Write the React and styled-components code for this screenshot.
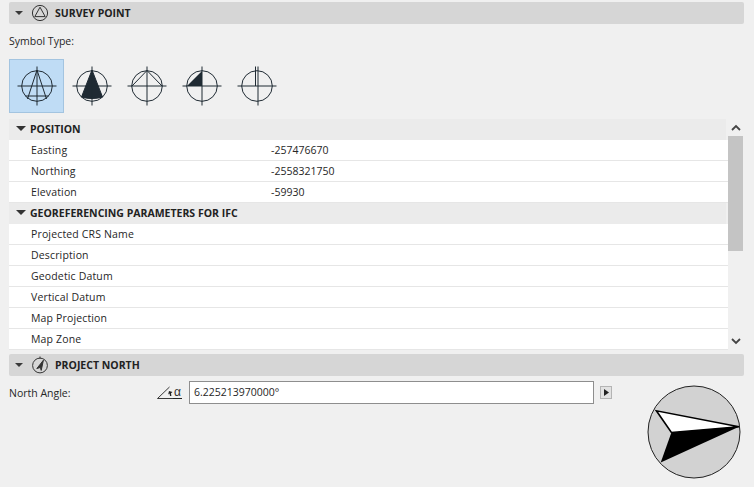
import React from "react";
import styled, { createGlobalStyle } from "styled-components";

const positionRows = [
  { label: "Easting", value: "-257476670" },
  { label: "Northing", value: "-2558321750" },
  { label: "Elevation", value: "-59930" },
];

const georefRows = [
  "Projected CRS Name",
  "Description",
  "Geodetic Datum",
  "Vertical Datum",
  "Map Projection",
  "Map Zone",
];

const ink = "#1f2a33";

function Crossed({ children }) {
  return (
    <svg width="44" height="44" viewBox="-22 -22 44 44" fill="none" stroke={ink} strokeWidth="1">
      <circle r="15.3" />
      {children}
    </svg>
  );
}

const FullCross = () => <path d="M-19.5 0H19.5M0 -19.5V19.5" />;

const symbols = [
  <Crossed key="a">
    <FullCross />
    <path d="M-9.5 13L0 -16L9.5 13M-11.5 10H11.5" />
  </Crossed>,
  <Crossed key="b">
    <path d="M-10.5 11L0 -16L10.5 11C4 13 -4 13 -10.5 11Z" fill={ink} />
    <FullCross />
  </Crossed>,
  <Crossed key="c">
    <FullCross />
    <path d="M-15 0L0 -15.5L15 0" />
  </Crossed>,
  <Crossed key="d">
    <path d="M-15 0L0 -15V0Z" fill={ink} stroke="none" />
    <FullCross />
  </Crossed>,
  <Crossed key="e">
    <path d="M-19.5 0H19.5M1 0V19.5M-1.5 -19.5V0M1 -19.5V0" />
  </Crossed>,
];

function App() {
  return (
    <Page>
      <GlobalStyle />
      <SectionBar>
        <Caret />
        <svg width="18" height="18" viewBox="0 0 18 18" fill="none" stroke="#333" strokeWidth="1">
          <circle cx="9" cy="9" r="7.6" />
          <path d="M9 3.2L14.2 12.6H3.8Z" />
        </svg>
        <BarTitle>SURVEY POINT</BarTitle>
      </SectionBar>

      <FieldLabel>Symbol Type:</FieldLabel>
      <SymbolRow>
        {symbols.map((symbol, i) => (
          <SymbolTile key={i} $selected={i === 0}>
            {symbol}
          </SymbolTile>
        ))}
      </SymbolRow>

      <TableWrap>
        <Table>
          <GroupRow>
            <GroupCaret />
            POSITION
          </GroupRow>
          {positionRows.map((row) => (
            <Row key={row.label}>
              <RowLabel>{row.label}</RowLabel>
              <span>{row.value}</span>
            </Row>
          ))}
          <GroupRow>
            <GroupCaret />
            GEOREFERENCING PARAMETERS FOR IFC
          </GroupRow>
          {georefRows.map((label) => (
            <Row key={label}>
              <RowLabel>{label}</RowLabel>
            </Row>
          ))}
        </Table>
        <Scrollbar>
          <ScrollArrow>
            <svg width="10" height="7" viewBox="0 0 10 7" fill="none" stroke="#444" strokeWidth="1.8">
              <path d="M1 6L5 2L9 6" />
            </svg>
          </ScrollArrow>
          <ScrollThumb />
          <ScrollArrow>
            <svg width="10" height="7" viewBox="0 0 10 7" fill="none" stroke="#444" strokeWidth="1.8">
              <path d="M1 1L5 5L9 1" />
            </svg>
          </ScrollArrow>
        </Scrollbar>
      </TableWrap>

      <SectionBar>
        <Caret />
        <svg width="18" height="18" viewBox="0 0 18 18" fill="none" stroke="#333" strokeWidth="1">
          <circle cx="9" cy="9.5" r="7.4" />
          <path d="M9 0.5V2.5" />
          <path d="M12.4 4.2L5.8 12.6L9.4 11.4L10.2 14.4Z" fill="#333" />
        </svg>
        <BarTitle>PROJECT NORTH</BarTitle>
      </SectionBar>

      <NorthBody>
        <NorthLabel>North Angle:</NorthLabel>
        <AngleGlyph>
          <svg width="16" height="13" viewBox="0 0 16 13" fill="none" stroke="#222" strokeWidth="0.9">
            <path d="M16 12.5H0.5L12.5 1" />
            <path d="M12 5L15.5 6L14 7.2L14.4 10H13L12.6 7.6L11.2 8.6Z" fill="#222" stroke="none" />
          </svg>
          <AlphaMark>α</AlphaMark>
        </AngleGlyph>
        <AngleInput>6.225213970000°</AngleInput>
        <StepButton>
          <svg width="5" height="7" viewBox="0 0 5 7">
            <path d="M0 0L5 3.5L0 7Z" fill="#222" />
          </svg>
        </StepButton>
        <Compass>
          <svg width="94" height="94" viewBox="0 0 94 94">
            <circle cx="47" cy="47" r="46" fill="#d2d2d2" stroke="#222" strokeWidth="1" />
            <path d="M92 41.8L9.4 25.8L24.4 47.5Z" fill="#fff" stroke="#000" strokeWidth="1.6" />
            <path d="M92 41.8L24.4 47.5L13.7 77.5Z" fill="#000" />
          </svg>
        </Compass>
      </NorthBody>
    </Page>
  );
}

const GlobalStyle = createGlobalStyle`
  html, body {
    margin: 0;
    padding: 0;
    background: #f0f0f0;
  }
  body {
    font-family: "Open Sans", "Noto Sans", sans-serif;
    font-size: 10.5px;
    color: #262626;
  }
`;

const Page = styled.div`
  width: 754px;
  height: 487px;
  padding: 2px 10px 0 9px;
  box-sizing: border-box;
  overflow: hidden;
`;

const SectionBar = styled.div`
  height: 22px;
  display: flex;
  align-items: center;
  gap: 6px;
  padding-left: 6px;
  background: #d6d6d6;
  border-radius: 2px;
`;

const Caret = styled.span`
  width: 0;
  height: 0;
  margin-right: 2px;
  border-left: 4px solid transparent;
  border-right: 4px solid transparent;
  border-top: 4px solid #3a3a3a;
`;

const BarTitle = styled.span`
  font-weight: 700;
  font-size: 10.5px;
  color: #222;
`;

const FieldLabel = styled.div`
  height: 14px;
  line-height: 14px;
  margin-top: 10px;
`;

const SymbolRow = styled.div`
  display: flex;
  margin-top: 11px;
`;

const SymbolTile = styled.div`
  width: 55px;
  height: 54px;
  box-sizing: border-box;
  display: flex;
  align-items: center;
  justify-content: center;
  background: ${({ $selected }) => ($selected ? "#bfdcf5" : "transparent")};
  border: 1px solid ${({ $selected }) => ($selected ? "#a3c4e0" : "transparent")};
`;

const TableWrap = styled.div`
  display: flex;
  margin: 6px 0 4px;
  height: 231px;
`;

const Table = styled.div`
  width: 719px;
  flex: none;
`;

const GroupRow = styled.div`
  height: 21px;
  box-sizing: border-box;
  display: flex;
  align-items: center;
  gap: 4px;
  margin-right: 2px;
  padding: 0 0 2px 7px;
  background: #ebebeb;
  font-weight: 700;
  color: #222;
`;

const GroupCaret = styled.span`
  width: 0;
  height: 0;
  border-left: 5px solid transparent;
  border-right: 5px solid transparent;
  border-top: 5px solid #333;
`;

const Row = styled.div`
  height: 21px;
  box-sizing: border-box;
  display: flex;
  align-items: center;
  padding-left: 22px;
  background: #fff;
  border-bottom: 1px solid #e6e6e6;
`;

const RowLabel = styled.span`
  width: 240px;
  flex: none;
  letter-spacing: 0.15px;
`;

const Scrollbar = styled.div`
  width: 15px;
  display: flex;
  flex-direction: column;
`;

const ScrollArrow = styled.div`
  height: 17px;
  display: flex;
  align-items: center;
  justify-content: center;
`;

const ScrollThumb = styled.div`
  height: 115px;
  margin-bottom: auto;
  background: #c4c4c4;
`;

const NorthBody = styled.div`
  display: flex;
  align-items: flex-start;
  padding-top: 5px;
`;

const NorthLabel = styled.span`
  width: 148px;
  flex: none;
  line-height: 24px;
`;

const AngleGlyph = styled.span`
  width: 32px;
  flex: none;
  height: 23px;
  display: flex;
  align-items: flex-end;
  padding-bottom: 5px;
  box-sizing: border-box;
`;

const AlphaMark = styled.span`
  font-family: "Liberation Sans", sans-serif;
  font-size: 12px;
  line-height: 12px;
  height: 12px;
  padding: 0 1px;
  color: #333;
  border-bottom: 1px solid #222;
`;

const AngleInput = styled.div`
  width: 405px;
  height: 23px;
  flex: none;
  box-sizing: border-box;
  padding-left: 4px;
  line-height: 21px;
  background: #fff;
  border: 1px solid #8e8e8e;
`;

const StepButton = styled.div`
  width: 12px;
  height: 13px;
  margin: 5px 0 0 6px;
  box-sizing: border-box;
  display: flex;
  align-items: center;
  justify-content: center;
  background: #e2e2e2;
  border: 1px solid #b4b4b4;
`;

const Compass = styled.div`
  margin: 4px 0 0 35px;
  height: 94px;
`;

export default App;
